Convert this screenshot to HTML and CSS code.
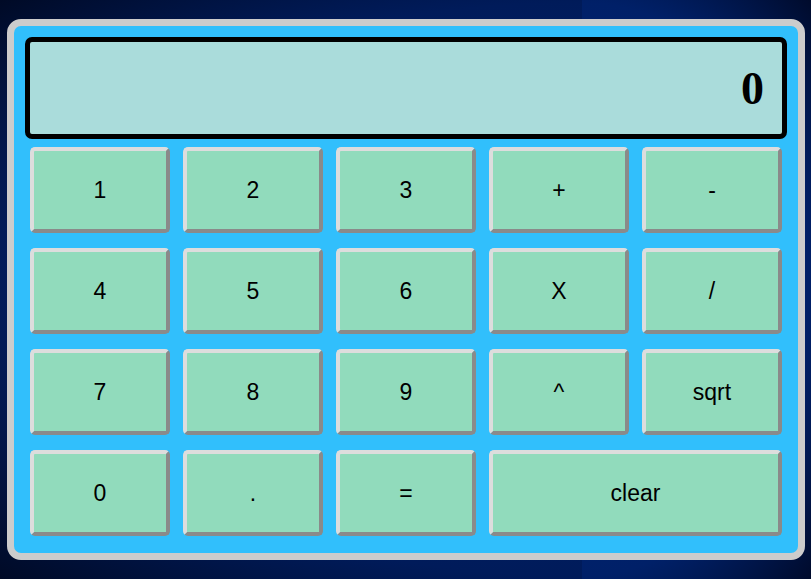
FILE: index.html
```html
<!DOCTYPE html>
<html lang="en">
<head>
<meta charset="utf-8">
<title>Calculator</title>
<link rel="stylesheet" href="styles.css">
</head>
<body>
  <div class="calc">
    <div class="display">0</div>
    <div class="keys">
      <button class="key">1</button>
      <button class="key">2</button>
      <button class="key">3</button>
      <button class="key">+</button>
      <button class="key">-</button>
      <button class="key">4</button>
      <button class="key">5</button>
      <button class="key">6</button>
      <button class="key">X</button>
      <button class="key">/</button>
      <button class="key">7</button>
      <button class="key">8</button>
      <button class="key">9</button>
      <button class="key">^</button>
      <button class="key">sqrt</button>
      <button class="key">0</button>
      <button class="key">.</button>
      <button class="key">=</button>
      <button class="key key-wide">clear</button>
    </div>
  </div>
</body>
</html>
```
FILE: styles.css
```css
html, body {
  margin: 0;
  height: 579px;
  overflow: hidden;
}
body {
  background-color: #001a58;
  background-image:
    radial-gradient(ellipse farthest-corner at 100% 100%, #00287a 0%, #001b5a 70%, #000a26 100%),
    radial-gradient(ellipse farthest-corner at 0% 100%, #002a80 0%, #002068 70%, #000b2c 100%),
    radial-gradient(ellipse farthest-corner at 100% 0%, #00287a 0%, #001b5a 70%, #000a26 100%),
    radial-gradient(ellipse farthest-corner at 0% 0%, #002a80 0%, #002068 70%, #000b2c 100%);
  background-size: 582px 283px, 229px 283px, 582px 296px, 229px 296px;
  background-position: 0 0, 582px 0, 0 283px, 582px 283px;
  background-repeat: no-repeat;
}
.calc {
  box-sizing: border-box;
  width: 798px;
  height: 541px;
  margin: 19px 0 0 7px;
  border: 7px solid #cccccc;
  border-radius: 14px;
  background: #31bffc;
  padding: 11px 11px 0 11px;
}
.display {
  box-sizing: border-box;
  height: 102px;
  border: 5px solid #000;
  border-radius: 7px;
  background: #aadcdb;
  display: flex;
  align-items: center;
  justify-content: flex-end;
  padding-right: 18px;
  font-family: "Liberation Serif", "Times New Roman", serif;
  font-weight: bold;
  font-size: 46px;
  color: #000;
}
.keys {
  margin: 8px 5px 0 5px;
  display: grid;
  grid-template-columns: repeat(5, 140px);
  grid-auto-rows: 86px;
  column-gap: 13px;
  row-gap: 15px;
}
.key {
  box-sizing: border-box;
  margin: 0;
  padding: 0;
  border: 4px solid;
  border-color: #dddddd #8a8a8a #8a8a8a #dddddd;
  border-radius: 5px;
  background: #91dbbc;
  font-family: "Liberation Sans", Arial, sans-serif;
  font-size: 23px;
  color: #000;
}
.key-wide {
  grid-column: span 2;
}
```
